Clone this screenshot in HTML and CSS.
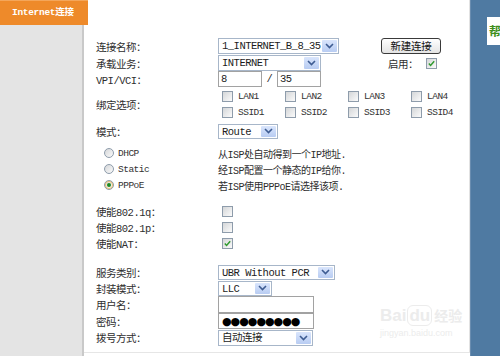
FILE: index.html
```html
<!DOCTYPE html>
<html lang="zh-CN">
<head>
<meta charset="utf-8">
<title>Internet连接</title>
<link rel="stylesheet" href="styles.css">
</head>
<body>
<div class="page">
  <aside class="side">
    <div class="tab">Internet连接</div>
  </aside>
  <main class="main">
    <div class="form">
      <div class="row">
        <span class="lbl">连接名称：</span>
        <div class="ctl">
          <div class="sel w-name"><span class="val">1_INTERNET_B_8_35</span><span class="arr"><svg viewBox="0 0 9 6" width="9" height="6"><path d="M1 1 L4.5 4.5 L8 1" fill="none" stroke="#3e5c92" stroke-width="1.6"/></svg></span></div>
          <button class="btn">新建连接</button>
        </div>
      </div>
      <div class="row r2">
        <span class="lbl">承载业务：</span>
        <div class="ctl">
          <div class="sel w-svc"><span class="val">INTERNET</span><span class="arr"><svg viewBox="0 0 9 6" width="9" height="6"><path d="M1 1 L4.5 4.5 L8 1" fill="none" stroke="#3e5c92" stroke-width="1.6"/></svg></span></div>
          <span class="enable">启用：</span>
          <span class="cb on enable-cb"><svg viewBox="0 0 10 10" width="9" height="9"><path d="M2 5 L4 7.2 L8 2.5" fill="none" stroke="#2f9a2f" stroke-width="1.6"/></svg></span>
        </div>
      </div>
      <div class="row">
        <span class="lbl">VPI/VCI：</span>
        <div class="ctl">
          <div class="inp w-vpi">8</div>
          <span class="slash">/</span>
          <div class="inp w-vpi">35</div>
        </div>
      </div>
      <div class="row bind">
        <span class="lbl">绑定选项：</span>
        <div class="bind-grid">
          <label class="opt"><span class="cb"></span>LAN1</label>
          <label class="opt"><span class="cb"></span>LAN2</label>
          <label class="opt"><span class="cb"></span>LAN3</label>
          <label class="opt"><span class="cb"></span>LAN4</label>
          <label class="opt"><span class="cb"></span>SSID1</label>
          <label class="opt"><span class="cb"></span>SSID2</label>
          <label class="opt"><span class="cb"></span>SSID3</label>
          <label class="opt"><span class="cb"></span>SSID4</label>
        </div>
      </div>
      <div class="row mode">
        <span class="lbl">模式：</span>
        <div class="ctl">
          <div class="sel w-route"><span class="val">Route</span><span class="arr"><svg viewBox="0 0 9 6" width="9" height="6"><path d="M1 1 L4.5 4.5 L8 1" fill="none" stroke="#3e5c92" stroke-width="1.6"/></svg></span></div>
        </div>
      </div>
      <div class="radios">
        <div class="row">
          <span class="lbl rlbl"><span class="rd"></span>DHCP</span>
          <span class="desc">从ISP处自动得到一个IP地址.</span>
        </div>
        <div class="row">
          <span class="lbl rlbl"><span class="rd"></span>Static</span>
          <span class="desc">经ISP配置一个静态的IP给你.</span>
        </div>
        <div class="row">
          <span class="lbl rlbl"><span class="rd on"></span>PPPoE</span>
          <span class="desc">若ISP使用PPPoE请选择该项.</span>
        </div>
      </div>
      <div class="checks">
        <div class="row">
          <span class="lbl">使能802.1q：</span>
          <div class="ctl"><span class="cb ind"></span></div>
        </div>
        <div class="row">
          <span class="lbl">使能802.1p：</span>
          <div class="ctl"><span class="cb ind"></span></div>
        </div>
        <div class="row">
          <span class="lbl">使能NAT：</span>
          <div class="ctl"><span class="cb on ind"><svg viewBox="0 0 10 10" width="9" height="9"><path d="M2 5 L4 7.2 L8 2.5" fill="none" stroke="#2f9a2f" stroke-width="1.6"/></svg></span></div>
        </div>
      </div>
      <div class="service">
        <div class="row">
          <span class="lbl">服务类别：</span>
          <div class="ctl">
            <div class="sel w-ubr"><span class="val">UBR Without PCR</span><span class="arr"><svg viewBox="0 0 9 6" width="9" height="6"><path d="M1 1 L4.5 4.5 L8 1" fill="none" stroke="#3e5c92" stroke-width="1.6"/></svg></span></div>
          </div>
        </div>
        <div class="row">
          <span class="lbl">封装模式：</span>
          <div class="ctl">
            <div class="sel w-llc"><span class="val">LLC</span><span class="arr"><svg viewBox="0 0 9 6" width="9" height="6"><path d="M1 1 L4.5 4.5 L8 1" fill="none" stroke="#3e5c92" stroke-width="1.6"/></svg></span></div>
          </div>
        </div>
        <div class="row tall">
          <span class="lbl">用户名：</span>
          <div class="ctl"><div class="inp w-user"></div></div>
        </div>
        <div class="row">
          <span class="lbl">密码：</span>
          <div class="ctl"><div class="inp w-user pw">●●●●●●●●●</div></div>
        </div>
        <div class="row tall">
          <span class="lbl">拨号方式：</span>
          <div class="ctl">
            <div class="sel w-dial"><span class="val">自动连接</span><span class="arr"><svg viewBox="0 0 9 6" width="9" height="6"><path d="M1 1 L4.5 4.5 L8 1" fill="none" stroke="#3e5c92" stroke-width="1.6"/></svg></span></div>
          </div>
        </div>
      </div>
    </div>
    <div class="watermark">
      <span class="wm-logo">Bai<span class="wm-du">du</span><span class="wm-cn">经验</span></span>
      <span class="wm-url">jingyan.baidu.com</span>
    </div>
  </main>
  <aside class="right">
    <div class="help">帮</div>
  </aside>
</div>
</body>
</html>
```

FILE: styles.css
```css
html, body {
  margin: 0;
  padding: 0;
  background: #ffffff;
}

body {
  width: 500px;
  height: 356px;
  overflow: hidden;
  font-family: "Liberation Mono", "Noto Sans CJK SC", monospace;
  font-size: 10.5px;
  letter-spacing: -0.5px;
  color: #2e2e2e;
}

.page {
  display: flex;
  width: 500px;
  height: 356px;
}

.side {
  width: 82px;
  flex: none;
  background: #e4e4e4;
  border-right: 2px solid #c9c9c9;
  position: relative;
  z-index: 2;
}

.tab {
  width: 88px;
  height: 25px;
  padding-left: 12px;
  background: #ee8a2a;
  border-top: 1px solid #f4a65a;
  box-sizing: border-box;
  color: #ffffff;
  font-weight: bold;
  font-size: 9.5px;
  line-height: 23px;
  letter-spacing: -0.3px;
  white-space: nowrap;
}

.main {
  flex: none;
  width: 385px;
  position: relative;
  background: #ffffff;
  border-right: 1px solid #e2e2e2;
  border-bottom: 1px solid #e6e6e6;
  height: 352px;
}

.form {
  padding: 38px 0 0 12px;
}

.row {
  display: grid;
  grid-template-columns: 122px 1fr;
  align-items: center;
  height: 16px;
}

.r2 {
  margin-top: 1px;
}

.ctl {
  display: flex;
  align-items: center;
}

.lbl {
  white-space: nowrap;
}

/* select look-alike */
.sel {
  display: flex;
  align-items: stretch;
  height: 16px;
  box-sizing: border-box;
  border: 1px solid #a7b6c9;
  background: #ffffff;
  color: #1c1c1c;
}

.sel .val {
  flex: 1;
  padding-left: 3px;
  line-height: 14px;
  white-space: nowrap;
  overflow: hidden;
}

.sel .arr {
  width: 15px;
  margin: 1px;
  display: flex;
  align-items: center;
  justify-content: center;
  background: linear-gradient(#d9e5fc, #b8ccf2);
  border-radius: 1px;
}

.w-name { width: 121px; }
.w-svc { width: 103px; }
.w-route { width: 60px; height: 15px; }
.w-ubr { width: 117px; height: 15px; }
.w-llc { width: 54px; height: 15px; }
.w-dial { width: 95px; height: 16px; }

.btn {
  margin-left: 42px;
  width: 60px;
  height: 16px;
  padding: 0;
  border: 1px solid #3a3a3a;
  border-radius: 3px;
  background: linear-gradient(#ffffff, #e4e4e4);
  font-family: "Noto Sans CJK SC", sans-serif;
  font-size: 10.5px;
  line-height: 14px;
  color: #111111;
  letter-spacing: -0.3px;
}

.enable {
  margin-left: 67px;
}

.enable-cb {
  margin-left: 8px;
}

/* text inputs */
.inp {
  height: 16px;
  box-sizing: border-box;
  border: 1px solid #a2a2a2;
  background: #ffffff;
  padding-left: 2px;
  line-height: 14px;
  color: #1c1c1c;
}

.w-vpi { width: 44px; }
.w-user { width: 96px; height: 17px; }

.slash {
  width: 15px;
  text-align: center;
}

.pw {
  font-family: "DejaVu Sans", sans-serif;
  font-size: 11px;
  letter-spacing: -1px;
  line-height: 15px;
  padding-left: 3px;
  color: #000000;
  height: 16px;
}

/* checkbox */
.cb {
  display: inline-flex;
  align-items: center;
  justify-content: center;
  width: 11px;
  height: 11px;
  box-sizing: border-box;
  border: 1px solid #8e9cab;
  background: linear-gradient(135deg, #d4d6d8, #fbfbfb);
  flex: none;
}

.ind {
  margin-left: 4px;
}

.bind {
  height: 31px;
  margin-top: 2px;
}

.bind-grid {
  display: grid;
  grid-template-columns: repeat(4, 63px);
  grid-auto-rows: 15.5px;
}

.opt {
  display: flex;
  align-items: center;
  gap: 5px;
  padding-left: 4px;
  font-size: 9.5px;
  color: #333333;
}

.mode {
  margin-top: 3px;
}

.radios {
  margin-top: 6px;
}

.rlbl {
  display: flex;
  align-items: center;
  padding-left: 8px;
  gap: 4px;
  font-size: 9.5px;
  color: #333333;
}

.rd {
  width: 10px;
  height: 10px;
  box-sizing: border-box;
  border-radius: 50%;
  border: 1px solid #8e9cab;
  background: linear-gradient(135deg, #d4d6d8, #fbfbfb);
  display: inline-block;
  position: relative;
}

.rd.on {
  box-shadow: inset 0 0 0 1px #f1c470;
}

.rd.on::after {
  content: "";
  position: absolute;
  left: 2px;
  top: 2px;
  width: 4px;
  height: 4px;
  border-radius: 50%;
  background: #1e8a22;
}

.desc {
  white-space: nowrap;
  font-size: 10px;
}

.checks {
  margin-top: 10px;
}

.service {
  margin-top: 13px;
}

.service .tall {
  height: 17px;
}

/* right help panel */
.right {
  flex: 1;
  background: #4f7aa2;
  border-left: 1px solid #6a8db0;
  padding-top: 17px;
  padding-left: 16px;
}

.help {
  height: 28px;
  background: #ffffff;
  color: #3f8f1c;
  font-family: "Noto Sans CJK SC", sans-serif;
  font-weight: bold;
  font-size: 12px;
  line-height: 28px;
  padding-left: 2px;
  white-space: nowrap;
  overflow: hidden;
}

/* Baidu watermark overlay */
.watermark {
  position: absolute;
  left: 296px;
  top: 304px;
  display: flex;
  flex-direction: column;
  color: #ececec;
  pointer-events: none;
}

.wm-logo {
  font-family: "Liberation Sans", sans-serif;
  font-weight: bold;
  font-size: 17px;
  letter-spacing: 0;
  line-height: 22px;
}

.wm-du {
  border: 1px solid #ececec;
  border-radius: 6px;
  padding: 0 1px;
  margin-left: 1px;
}

.wm-cn {
  font-family: "Noto Sans CJK SC", sans-serif;
  font-size: 14px;
  margin-left: 2px;
}

.wm-url {
  font-family: "Liberation Sans", sans-serif;
  font-size: 9px;
  letter-spacing: 0;
  margin-top: 1px;
}
```
